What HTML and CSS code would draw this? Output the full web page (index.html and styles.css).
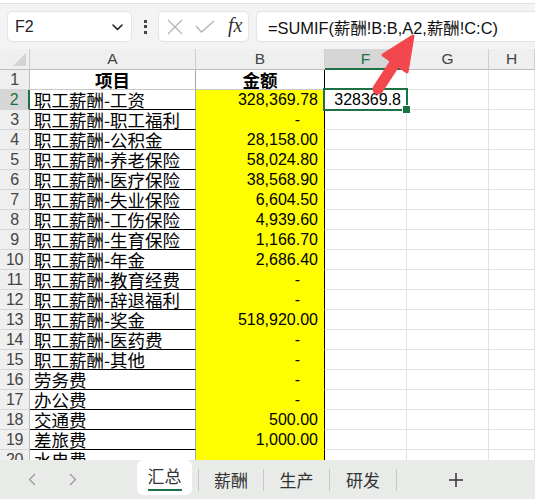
FILE: index.html
```html
<!DOCTYPE html>
<html lang="zh-CN">
<head>
<meta charset="utf-8">
<title>汇总</title>
<link rel="stylesheet" href="styles.css">
</head>
<body>
<div class="app">
  <div class="topstrip"></div>
  <div class="fbar">
    <div class="namebox"><span>F2</span>
      <svg class="chev" width="11" height="7" viewBox="0 0 11 7"><polyline points="1,1 5.5,5.5 10,1" fill="none" stroke="#222" stroke-width="1.6" stroke-linecap="round" stroke-linejoin="round"/></svg>
    </div>
    <div class="dots"><i></i><i></i><i></i></div>
    <div class="btns">
      <svg width="16" height="16" viewBox="0 0 16 16"><path d="M1 1 L15 15 M15 1 L1 15" stroke="#b4b4b4" stroke-width="1.3" fill="none"/></svg>
      <svg width="20" height="13" viewBox="0 0 20 13"><polyline points="1,6 6.5,12 19,1" stroke="#b4b4b4" stroke-width="1.3" fill="none"/></svg>
      <span class="fx">fx</span>
    </div>
    <div class="formula">=SUMIF(薪酬!B:B,A2,薪酬!C:C)</div>
  </div>

  <div class="sheetwrap">
    <div class="sheet">
      <div class="ch corner"><span class="tri"></span></div>
      <div class="ch">A</div>
      <div class="ch">B</div>
      <div class="ch selh">F</div>
      <div class="ch">G</div>
      <div class="ch">H</div>

      <div class="rh">1</div><div class="c a hd r1">项目</div><div class="c b hd r1 nofill">金额</div><div class="c"></div><div class="c"></div><div class="c"></div>
      <div class="rh selr">2</div><div class="c a">职工薪酬-工资</div><div class="c b">328,369.78</div><div class="c f sel">328369.8</div><div class="c"></div><div class="c"></div>
      <div class="rh">3</div><div class="c a">职工薪酬-职工福利</div><div class="c b dash">-</div><div class="c"></div><div class="c"></div><div class="c"></div>
      <div class="rh">4</div><div class="c a">职工薪酬-公积金</div><div class="c b">28,158.00</div><div class="c"></div><div class="c"></div><div class="c"></div>
      <div class="rh">5</div><div class="c a">职工薪酬-养老保险</div><div class="c b">58,024.80</div><div class="c"></div><div class="c"></div><div class="c"></div>
      <div class="rh">6</div><div class="c a">职工薪酬-医疗保险</div><div class="c b">38,568.90</div><div class="c"></div><div class="c"></div><div class="c"></div>
      <div class="rh">7</div><div class="c a">职工薪酬-失业保险</div><div class="c b">6,604.50</div><div class="c"></div><div class="c"></div><div class="c"></div>
      <div class="rh">8</div><div class="c a">职工薪酬-工伤保险</div><div class="c b">4,939.60</div><div class="c"></div><div class="c"></div><div class="c"></div>
      <div class="rh">9</div><div class="c a">职工薪酬-生育保险</div><div class="c b">1,166.70</div><div class="c"></div><div class="c"></div><div class="c"></div>
      <div class="rh">10</div><div class="c a">职工薪酬-年金</div><div class="c b">2,686.40</div><div class="c"></div><div class="c"></div><div class="c"></div>
      <div class="rh">11</div><div class="c a">职工薪酬-教育经费</div><div class="c b dash">-</div><div class="c"></div><div class="c"></div><div class="c"></div>
      <div class="rh">12</div><div class="c a">职工薪酬-辞退福利</div><div class="c b dash">-</div><div class="c"></div><div class="c"></div><div class="c"></div>
      <div class="rh">13</div><div class="c a">职工薪酬-奖金</div><div class="c b">518,920.00</div><div class="c"></div><div class="c"></div><div class="c"></div>
      <div class="rh">14</div><div class="c a">职工薪酬-医药费</div><div class="c b dash">-</div><div class="c"></div><div class="c"></div><div class="c"></div>
      <div class="rh">15</div><div class="c a">职工薪酬-其他</div><div class="c b dash">-</div><div class="c"></div><div class="c"></div><div class="c"></div>
      <div class="rh">16</div><div class="c a">劳务费</div><div class="c b dash">-</div><div class="c"></div><div class="c"></div><div class="c"></div>
      <div class="rh">17</div><div class="c a">办公费</div><div class="c b dash">-</div><div class="c"></div><div class="c"></div><div class="c"></div>
      <div class="rh">18</div><div class="c a">交通费</div><div class="c b">500.00</div><div class="c"></div><div class="c"></div><div class="c"></div>
      <div class="rh">19</div><div class="c a">差旅费</div><div class="c b">1,000.00</div><div class="c"></div><div class="c"></div><div class="c"></div>
      <div class="rh">20</div><div class="c a">水电费</div><div class="c b"></div><div class="c"></div><div class="c"></div><div class="c"></div>
    </div>
  </div>

  <div class="tabs">
    <div class="nav">
      <svg width="8" height="13" viewBox="0 0 8 13"><polyline points="7,1 1.5,6.5 7,12" fill="none" stroke="#9a9a9a" stroke-width="1.3"/></svg>
      <svg width="8" height="13" viewBox="0 0 8 13"><polyline points="1,1 6.5,6.5 1,12" fill="none" stroke="#9a9a9a" stroke-width="1.3"/></svg>
    </div>
    <div class="tab active"><span>汇总</span></div>
    <span class="sep first"></span>
    <div class="tab w64">薪酬</div>
    <span class="sep"></span>
    <div class="tab w65">生产</div>
    <span class="sep"></span>
    <div class="tab w66">研发</div>
    <span class="sep"></span>
    <div class="plus">
      <svg width="14" height="14" viewBox="0 0 14 14"><path d="M7 0 V14 M0 7 H14" stroke="#333" stroke-width="1.5"/></svg>
    </div>
  </div>
  <div class="bottomstrip"></div>

  <svg class="arrow" width="535" height="503" viewBox="0 0 535 503">
    <line x1="378" y1="89" x2="395" y2="63" stroke="#f2474c" stroke-width="11" stroke-linecap="round"/>
    <polygon points="413,36 383,55 407,72" fill="#f2474c" stroke="#f2474c" stroke-width="3" stroke-linejoin="round"/>
  </svg>
</div>
</body>
</html>
```

FILE: styles.css
```css
* { box-sizing: border-box; }
html, body { margin: 0; padding: 0; }
body {
  width: 535px;
  height: 503px;
  overflow: hidden;
  background: #fff;
  font-family: "Liberation Sans", "Noto Sans CJK SC", sans-serif;
  color: #000;
}
.app {
  position: relative;
  width: 535px;
  height: 503px;
  display: flex;
  flex-direction: column;
  background: #f3f3f3;
}
.topstrip {
  height: 4px;
  background: #fff;
  border-bottom: 1px solid #e2e2e2;
  flex: none;
}
.fbar {
  display: flex;
  align-items: center;
  padding: 7px 0 0 7px;
  height: 38px;
  flex: none;
}
.namebox {
  width: 125px;
  height: 31px;
  background: #fff;
  border: 1px solid #e3e3e3;
  border-radius: 5px;
  display: flex;
  align-items: center;
  justify-content: space-between;
  padding: 0 8px 0 7px;
  font-size: 16px;
  color: #222;
}
.chev { margin-top: 1px; }
.dots {
  width: 26px;
  display: flex;
  flex-direction: column;
  align-items: center;
  gap: 2.5px;
}
.dots i {
  display: block;
  width: 3px;
  height: 3px;
  background: #444;
}
.btns {
  width: 91px;
  height: 31px;
  background: #fff;
  border: 1px solid #e3e3e3;
  border-radius: 5px;
  display: flex;
  align-items: center;
  padding: 0 0 0 8px;
}
.btns svg:first-child { margin-right: 12px; }
.btns svg:nth-child(2) { margin-right: 13px; }
.fx {
  font-family: "Liberation Serif", "DejaVu Serif", serif;
  font-style: italic;
  font-size: 20px;
  color: #333;
  margin-top: -2px;
}
.formula {
  flex: 1;
  margin-left: 7px;
  margin-right: -10px;
  height: 31px;
  background: #fff;
  border: 1px solid #e3e3e3;
  border-radius: 5px;
  display: flex;
  align-items: center;
  padding-left: 11px;
  font-size: 16.4px;
  color: #111;
  white-space: nowrap;
}

.sheetwrap {
  flex: none;
  height: 418px;
  padding-top: 7px;
  overflow: hidden;
}
.sheet {
  display: grid;
  grid-template-columns: 30px 166px 129px 82px 82px 1fr;
  grid-template-rows: 21px;
  grid-auto-rows: 20px;
  background: #fff;
}
.ch {
  background: #efefef;
  border-right: 1px solid #cfcfcf;
  border-bottom: 1px solid #bdbdbd;
  font-size: 15.5px;
  color: #444;
  display: flex;
  align-items: center;
  justify-content: center;
}
.ch.corner {
  justify-content: flex-end;
  align-items: flex-end;
  padding: 0 3px 3px 0;
}
.tri {
  width: 0;
  height: 0;
  border-left: 13px solid transparent;
  border-bottom: 13px solid #d3d3d3;
}
.ch.selh {
  background: #d6d6d6;
  color: #1e7145;
  border-bottom: 2px solid #1e7145;
}
.rh {
  background: #efefef;
  border-right: 1px solid #bdbdbd;
  border-bottom: 1px solid #d6d6d6;
  font-size: 16px;
  color: #444;
  display: flex;
  align-items: center;
  justify-content: center;
  letter-spacing: -0.5px;
}
.rh.selr {
  background: #d6d6d6;
  color: #1e7145;
  border-right: 2px solid #1e7145;
}
.c {
  border-right: 1px solid #e1e1e1;
  border-bottom: 1px solid #e1e1e1;
  font-size: 16px;
  display: flex;
  align-items: center;
  white-space: nowrap;
  line-height: 19px;
}
.a {
  font-family: "Noto Sans CJK SC", sans-serif;
  font-size: 17.5px;
  border-right-color: #a8a8a8;
  border-bottom-color: #000;
  padding-left: 4px;
}
.b {
  background: #ffff00;
  border-right-color: #000;
  border-bottom-color: #ffff00;
  justify-content: flex-end;
  padding-right: 6px;
}
.b.dash { padding-right: 24px; }
.hd {
  font-family: "Noto Sans CJK SC", sans-serif;
  font-weight: bold;
  font-size: 17.5px;
  justify-content: center;
  padding: 0;
}
.r1 { border-bottom-color: #c8c8c8; }
.b.nofill { background: #fff; }
.f {
  justify-content: flex-end;
  padding-right: 5px;
}
.sel { position: relative; }
.sel::after {
  content: "";
  position: absolute;
  left: -2px;
  top: -2px;
  right: -2px;
  bottom: -2px;
  border: 2px solid #1e7145;
}
.sel::before {
  content: "";
  position: absolute;
  right: -5px;
  bottom: -5px;
  width: 7px;
  height: 7px;
  background: #1e7145;
  border: 1px solid #fff;
  z-index: 2;
}

.tabs {
  flex: none;
  height: 39px;
  background: #e9ebe9;
  display: flex;
  align-items: flex-start;
}
.nav {
  width: 137px;
  height: 39px;
  display: flex;
  align-items: center;
  padding-left: 28px;
  gap: 33px;
}
.tab {
  height: 39px;
  display: flex;
  align-items: center;
  justify-content: center;
  font-family: "Noto Sans CJK SC", sans-serif;
  font-size: 17px;
  color: #333;
}
.tab.active {
  width: 55px;
  height: 35px;
  background: #fff;
  border-radius: 6px;
  padding-bottom: 2px;
}
.tab.active span {
  border-bottom: 2px solid #1e7145;
  line-height: 26px;
  padding-top: 1px;
}
.w64 { width: 64px; }
.w65 { width: 65px; }
.w66 { width: 66px; }
.sep {
  width: 1px;
  height: 22px;
  margin-top: 9px;
  background: #c9c9c9;
}
.sep.first { margin-left: 6px; }
.plus {
  width: 118px;
  height: 39px;
  display: flex;
  align-items: center;
  justify-content: center;
}
.bottomstrip {
  flex: 1;
  background: #fff;
}
.arrow {
  position: absolute;
  left: 0;
  top: 0;
  pointer-events: none;
}
```
